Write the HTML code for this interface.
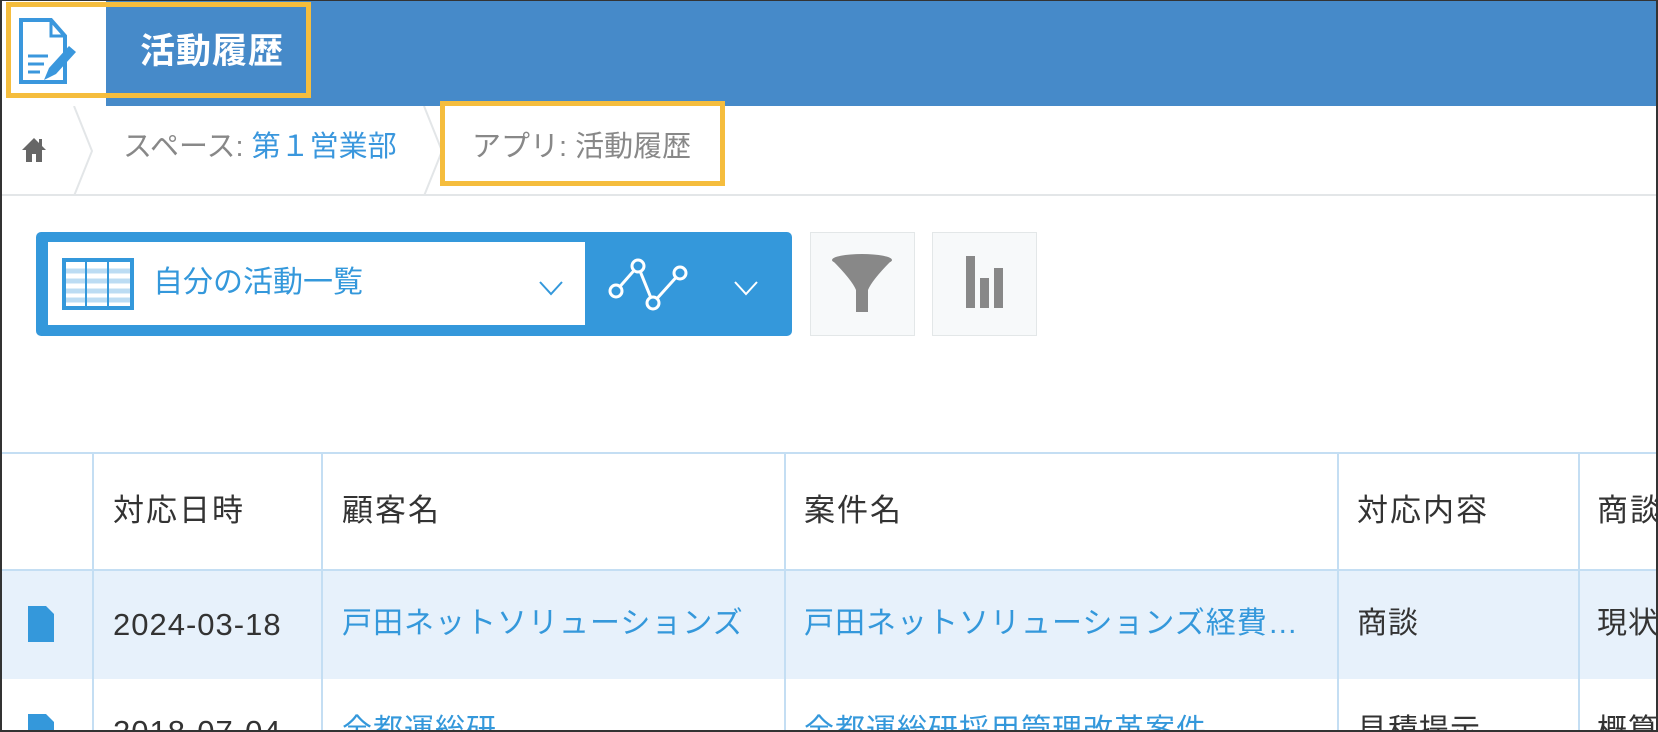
<!DOCTYPE html>
<html><head><meta charset="utf-8"><style>
*{margin:0;padding:0;box-sizing:border-box}
html,body{width:1658px;height:732px;overflow:hidden}
body{background:#fff;position:relative;font-family:"Liberation Sans","Noto Sans CJK JP",sans-serif}
.a{position:absolute}
.t{position:absolute;white-space:nowrap;line-height:1}
.h{font-size:31px;letter-spacing:2px;color:#333}
.r{font-size:30px;letter-spacing:1px}
</style></head><body>
<div class="a" style="left:0;top:0;width:1658px;height:732px;border:2px solid #333;border-top-width:1px;z-index:50;pointer-events:none"></div>
<!-- header -->
<div class="a" style="left:106px;top:0;width:1552px;height:106px;background:#468ac9"></div>
<div class="t" style="left:140px;top:34px;font-size:35px;font-weight:bold;color:#fff;letter-spacing:1px">活動履歴</div>
<svg class="a" style="left:16px;top:16px" width="66" height="72" viewBox="0 0 66 72">
<path d="M5 4h30l14 16v46H5z" fill="none" stroke="#3a97dd" stroke-width="4"/>
<path d="M35 4v16h14" fill="none" stroke="#3a97dd" stroke-width="3"/>
<path d="M12 40h20M12 48h16M12 56h12" stroke="#3a97dd" stroke-width="3"/>
<path d="M28 64l5-12 20-22 7 6-20 22z" fill="#3a97dd"/>
</svg>
<div class="a" style="left:6px;top:2px;width:305px;height:96px;border:5px solid #f5bd3d"></div>
<!-- breadcrumb -->
<div class="a" style="left:0;top:194px;width:1658px;height:2px;background:#e3e6e8"></div>
<svg class="a" style="left:70px;top:106px" width="30" height="90"><path d="M4 0l18 45-18 45" fill="none" stroke="#e3e6e8" stroke-width="2"/></svg>
<svg class="a" style="left:420px;top:106px" width="30" height="90"><path d="M4 0l18 45-18 45" fill="none" stroke="#e3e6e8" stroke-width="2"/></svg>
<svg class="a" style="left:20px;top:136px" width="28" height="28" viewBox="0 0 28 28"><path d="M14 2L2 14h4v12h6v-8h4v8h6V14h4z" fill="#666"/><rect x="19" y="3" width="3" height="7" fill="#666"/></svg>
<div class="t" style="left:123px;top:133px;font-size:29px;color:#888">スペース: <span style="color:#3a97dd">第１営業部</span></div>
<div class="t" style="left:472px;top:133px;font-size:29px;color:#888">アプリ: 活動履歴</div>
<div class="a" style="left:440px;top:101px;width:285px;height:85px;border:5px solid #f5bd3d"></div>
<!-- view selector -->
<div class="a" style="left:36px;top:232px;width:756px;height:104px;background:#3498db;border-radius:5px"></div>
<div class="a" style="left:48px;top:242px;width:537px;height:83px;background:#fff"></div>
<svg class="a" style="left:62px;top:258px" width="72" height="52" viewBox="0 0 72 52">
<rect x="2" y="2" width="68" height="48" fill="#fff" stroke="#3498db" stroke-width="4"/>
<path d="M4 13h64M4 23h64M4 33h64M4 42h64" stroke="#bcdcf3" stroke-width="5"/>
<path d="M24 4v44M46 4v44" stroke="#3498db" stroke-width="2"/>
</svg>
<div class="t" style="left:153px;top:268px;font-size:30px;color:#3498db">自分の活動一覧</div>
<svg class="a" style="left:538px;top:280px" width="26" height="16"><path d="M2 2l11 12 11-12" fill="none" stroke="#3498db" stroke-width="2"/></svg>
<svg class="a" style="left:606px;top:256px" width="90" height="56" viewBox="0 0 90 56">
<path d="M10 35L32 10 47 47 74 17" fill="none" stroke="#fff" stroke-width="3"/>
<circle cx="10" cy="35" r="6" fill="#3498db" stroke="#fff" stroke-width="3"/>
<circle cx="32" cy="10" r="6" fill="#3498db" stroke="#fff" stroke-width="3"/>
<circle cx="47" cy="47" r="6" fill="#3498db" stroke="#fff" stroke-width="3"/>
<circle cx="74" cy="17" r="6" fill="#3498db" stroke="#fff" stroke-width="3"/>
</svg>
<svg class="a" style="left:733px;top:280px" width="26" height="16"><path d="M2 2l11 12 11-12" fill="none" stroke="#fff" stroke-width="2"/></svg>
<!-- filter / graph -->
<div class="a" style="left:810px;top:232px;width:105px;height:104px;background:#f7f9fa;border:1px solid #e3e7e8"></div>
<svg class="a" style="left:830px;top:252px" width="64" height="64" viewBox="0 0 64 64"><ellipse cx="32" cy="8" rx="30" ry="6" fill="#888"/><path d="M2 8q20 20 24 30v22h12V38q4-10 24-30z" fill="#888"/></svg>
<div class="a" style="left:932px;top:232px;width:105px;height:104px;background:#f7f9fa;border:1px solid #e3e7e8"></div>
<svg class="a" style="left:962px;top:256px" width="44" height="54"><rect x="4" y="0" width="9" height="52" fill="#888"/><rect x="18" y="22" width="9" height="30" fill="#888"/><rect x="32" y="12" width="9" height="40" fill="#888"/></svg>
<!-- table -->
<div class="a" style="left:0;top:452px;width:1658px;height:2px;background:#c4def3"></div>
<div class="a" style="left:0;top:569px;width:1658px;height:2px;background:#c4def3"></div>
<div class="a" style="left:0;top:571px;width:1658px;height:108px;background:#e7f1fb"></div>
<div class="a" style="left:92px;top:452px;width:2px;height:280px;background:#c4def3"></div>
<div class="a" style="left:321px;top:452px;width:2px;height:280px;background:#c4def3"></div>
<div class="a" style="left:784px;top:452px;width:2px;height:280px;background:#c4def3"></div>
<div class="a" style="left:1337px;top:452px;width:2px;height:280px;background:#c4def3"></div>
<div class="a" style="left:1578px;top:452px;width:2px;height:280px;background:#c4def3"></div>
<div class="t h" style="left:113px;top:495px">対応日時</div>
<div class="t h" style="left:342px;top:495px">顧客名</div>
<div class="t h" style="left:804px;top:495px">案件名</div>
<div class="t h" style="left:1357px;top:495px">対応内容</div>
<div class="t h" style="left:1597px;top:495px">商談</div>
<svg class="a" style="left:28px;top:606px" width="26" height="36"><path d="M0 0h18l8 8v28H0z" fill="#3498db"/></svg>
<div class="t r" style="left:113px;top:609px;color:#333;font-size:31px">2024-03-18</div>
<div class="t r" style="left:342px;top:609px;color:#3498db">戸田ネットソリューションズ</div>
<div class="t r" style="left:804px;top:609px;color:#3498db">戸田ネットソリューションズ経費…</div>
<div class="t r" style="left:1357px;top:609px;color:#333">商談</div>
<div class="t r" style="left:1597px;top:609px;color:#333">現状</div>
<svg class="a" style="left:28px;top:714px" width="26" height="36"><path d="M0 0h18l8 8v28H0z" fill="#3498db"/></svg>
<div class="t r" style="left:113px;top:716px;color:#333;font-size:31px">2018-07-04</div>
<div class="t r" style="left:342px;top:716px;color:#3498db">全都運総研</div>
<div class="t r" style="left:804px;top:716px;color:#3498db">全都運総研採用管理改革案件</div>
<div class="t r" style="left:1357px;top:716px;color:#333">見積提示</div>
<div class="t r" style="left:1597px;top:716px;color:#333">概算</div>
</body></html>
